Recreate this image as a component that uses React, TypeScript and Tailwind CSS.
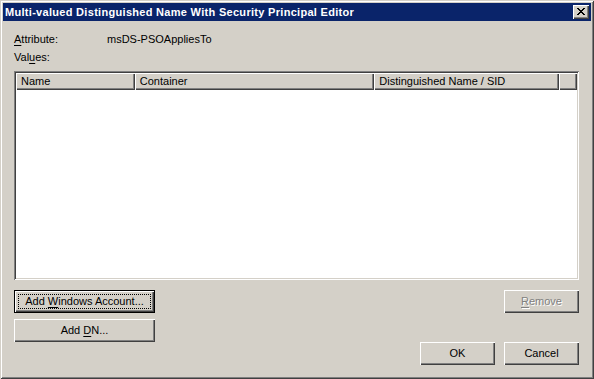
import React from 'react';

const raised =
  'shadow-[inset_1px_1px_#ffffff,inset_-1px_-1px_#404040,inset_-2px_-2px_#808080]';

const Button: React.FC<{
  className?: string;
  isDefault?: boolean;
  disabled?: boolean;
  children: React.ReactNode;
}> = ({ className = '', isDefault, disabled, children }) => {
  if (isDefault) {
    return (
      <div className={`h-[23px] border border-black bg-[#d4d0c8] ${className}`}>
        <div className={`h-full flex items-center justify-center p-[3px] ${raised}`}>
          <div className="h-full w-full flex items-center justify-center border border-dotted border-black">
            {children}
          </div>
        </div>
      </div>
    );
  }
  return (
    <div
      className={`h-[23px] flex items-center justify-center bg-[#d4d0c8] ${raised} ${
        disabled ? 'text-[#808080] [text-shadow:1px_1px_0_#ffffff]' : 'text-black'
      } ${className}`}
    >
      {children}
    </div>
  );
};

const HeaderCell: React.FC<{ w: string; children?: React.ReactNode }> = ({ w, children }) => (
  <div className={`${w} h-full flex items-center pl-[5px] bg-[#d4d0c8] ${raised}`}>{children}</div>
);

export default function App() {
  return (
    <div
      className="w-[594px] h-[379px] bg-[#d4d0c8] p-[3px] flex flex-col text-[11px] text-black shadow-[inset_1px_1px_#d4d0c8,inset_-1px_-1px_#404040,inset_2px_2px_#ffffff,inset_-2px_-2px_#808080]"
      style={{ fontFamily: '"Liberation Sans", Arial, sans-serif' }}
    >
      {/* Title bar */}
      <div className="h-[18px] bg-[#0a246a] flex items-center justify-between pl-[2px] pr-[2px]">
        <span className="text-white font-bold text-[11px] leading-none tracking-[0.3px]">
          Multi-valued Distinguished Name With Security Principal Editor
        </span>
        <div className={`w-[16px] h-[14px] bg-[#d4d0c8] flex items-center justify-center ${raised}`}>
          <svg width="8" height="7" viewBox="0 0 8 7" className="mt-[-1px] ml-[-1px]">
            <path
              d="M0 0h2v1h1v1h2V1h1V0h2v1H7v1H6v1H5v1h1v1h1v1h1v1H6V6H5V5H3v1H2v1H0V6h1V5h1V4h1V3H2V2H1V1H0z"
              fill="#000"
            />
          </svg>
        </div>
      </div>

      {/* Body */}
      <div className="flex-1 flex flex-col pl-[11px] pr-[12px] pt-[12px] pb-[11px]">
        <div className="h-[13px] flex items-center">
          <span className="w-[93px]">
            <span className="underline underline-offset-2">A</span>ttribute:
          </span>
          <span>msDS-PSOAppliesTo</span>
        </div>
        <div className="h-[13px] flex items-center mt-[5px]">
          <span>
            Val<span className="underline underline-offset-2">u</span>es:
          </span>
        </div>

        {/* List view */}
        <div className="mt-[7px] h-[209px] bg-white shadow-[inset_1px_1px_#808080,inset_-1px_-1px_#ffffff,inset_2px_2px_#404040,inset_-2px_-2px_#d4d0c8] p-[2px] flex flex-col">
          <div className="h-[17px] flex">
            <HeaderCell w="w-[119px]">Name</HeaderCell>
            <HeaderCell w="w-[240px]">Container</HeaderCell>
            <HeaderCell w="w-[185px]">Distinguished Name / SID</HeaderCell>
            <HeaderCell w="w-[18px]" />
          </div>
          <div className="flex-1" />
        </div>

        {/* Buttons */}
        <div className="mt-[10px] h-[75px] flex justify-between">
          <div className="flex flex-col gap-[6px]">
            <Button isDefault className="w-[141px]">
              <span>
                Add <span className="underline underline-offset-2">W</span>indows Account...
              </span>
            </Button>
            <Button className="w-[141px]">
              <span>
                Add <span className="underline underline-offset-2">D</span>N...
              </span>
            </Button>
          </div>
          <div className="flex flex-col justify-between items-end">
            <Button disabled className="w-[75px]">
              <span>
                <span className="underline underline-offset-2">R</span>emove
              </span>
            </Button>
            <div className="flex gap-[9px]">
              <Button className="w-[75px]">OK</Button>
              <Button className="w-[75px]">Cancel</Button>
            </div>
          </div>
        </div>
      </div>
    </div>
  );
}
